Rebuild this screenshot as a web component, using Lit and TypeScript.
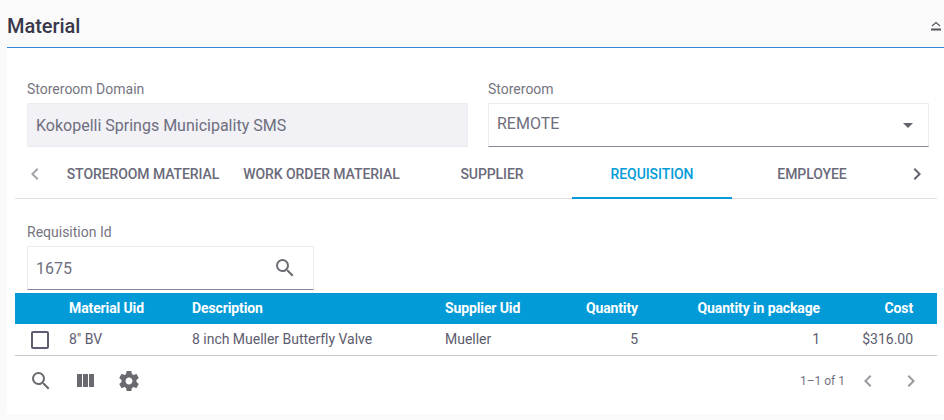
import { LitElement, html, css, svg } from "lit";
import { customElement } from "lit/decorators.js";

const P = {
  search: "M15.5 14h-.79l-.28-.27A6.471 6.471 0 0 0 16 9.5 6.5 6.5 0 1 0 9.5 16c1.61 0 3.09-.59 4.23-1.57l.27.28v.79l5 4.99L20.49 19l-4.99-5zm-6 0C7.01 14 5 11.99 5 9.5S7.01 5 9.5 5 14 7.01 14 9.5 11.99 14 9.5 14z",
  cols: "M10 18h5V5h-5v13zm-6 0h5V5H4v13zM16 5v13h5V5h-5z",
  gear: "M19.43 12.98c.04-.32.07-.64.07-.98s-.03-.66-.07-.98l2.11-1.65c.19-.15.24-.42.12-.64l-2-3.46c-.12-.22-.39-.3-.61-.22l-2.49 1c-.52-.4-1.08-.73-1.69-.98l-.38-2.65A.488.488 0 0 0 14 2h-4c-.25 0-.46.18-.49.42l-.38 2.65c-.61.25-1.17.59-1.69.98l-2.49-1c-.23-.09-.49 0-.61.22l-2 3.46c-.13.22-.07.49.12.64l2.11 1.65c-.04.32-.07.65-.07.98s.03.66.07.98l-2.11 1.65c-.19.15-.24.42-.12.64l2 3.46c.12.22.39.3.61.22l2.49-1c.52.4 1.08.73 1.69.98l.38 2.65c.03.24.24.42.49.42h4c.25 0 .46-.18.49-.42l.38-2.65c.61-.25 1.17-.59 1.69-.98l2.49 1c.23.09.49 0 .61-.22l2-3.46c.12-.22.07-.49-.12-.64l-2.11-1.65zM12 15.5c-1.93 0-3.5-1.57-3.5-3.5s1.57-3.5 3.5-3.5 3.5 1.57 3.5 3.5-1.57 3.5-3.5 3.5z",
  left: "M15.41 7.41L14 6l-6 6 6 6 1.41-1.41L10.83 12z",
  right: "M8.59 16.59L10 18l6-6-6-6-1.41 1.41L13.17 12z",
  drop: "M7 10l5 5 5-5z",
  box: "M19 5v14H5V5h14m0-2H5c-1.1 0-2 .9-2 2v14c0 1.1.9 2 2 2h14c1.1 0 2-.9 2-2V5c0-1.1-.9-2-2-2z",
};
const icon = (d: string, cls = "") =>
  html`<svg class="ic ${cls}" viewBox="0 0 24 24">${svg`<path d=${d}></path>`}</svg>`;

@customElement("app-root")
export class AppRoot extends LitElement {
  static styles = css`
    :host { display: block; width: 944px; height: 420px; background: #fafafa; overflow: hidden;
      font-family: Roboto, "Liberation Sans", sans-serif; color: #6e6e80; }
    * { box-sizing: border-box; }
    .ic { width: 24px; height: 24px; fill: currentColor; display: block; flex: none; }
    .head { height: 48px; margin-left: 7px; border-bottom: 1px solid #2f86d8; display: flex;
      align-items: center; justify-content: space-between; padding-top: 4px; }
    .title { font-size: 20px; font-weight: 500; color: #38384a; letter-spacing: -.05px; }
    .collapse { width: 10px; height: 10px; margin-right: 3px; display: block; fill: none; stroke: #55555f; }
    .card { margin-left: 7px; height: 366px; background: #fff; padding-top: 29px; }
    .fields { display: grid; grid-template-columns: 441px 441px; column-gap: 20px; padding-left: 20px; }
    .label { font-size: 14px; line-height: 16px; height: 18px; color: #75757f; padding-top: 4px; margin-bottom: 8px; }
    .input { height: 44px; font-size: 16px; display: flex; align-items: center; padding: 0 8px; color: #6e6e7e; }
    .disabled { background: #f1f1f6; border: 1px solid #ebebf0; border-radius: 1px; }
    .outlined { background: #fff; border: 1px solid #ebebf0; border-bottom: 1px solid #86869a; justify-content: space-between; }
    .outlined .ic { color: #63636b; }
    .remote { margin-top: -3px; }
    .tabs { margin: 3px 7px 0 8px; height: 49px; border-bottom: 1px solid #dfdfe3; display: flex; }
    .arrow { width: 40px; display: flex; align-items: center; justify-content: center; color: #a3a3ab; }
    .arrow.r { width: 45px; padding-left: 5px; color: #63636f; }
    .tab { height: 49px; font-size: 14px; font-weight: 500; color: #6a6a7a; display: flex; align-items: center;
      justify-content: center; white-space: nowrap; border-bottom: 2px solid transparent; letter-spacing: -.08px; padding-top: 1px; }
    .w176 { width: 176px; } .w181 { width: 181px; } .w160 { width: 160px; }
    .tab.active { color: #029bd8; border-bottom-color: #029bd8; }
    .req { padding: 21px 0 0 20px; }
    .searchbox { width: 287px; }
    .searchbox .ic { margin-right: 8px; color: #6b6b73; }
    .table { margin: 3px 7px 0 8px; }
    .row { display: grid; grid-template-columns: 54px 123px 253px 100px 93px 182px 93px 24px; align-items: center; }
    .row span { padding-bottom: 2px; }
    .hd { height: 31px; background: #029bd8; color: #fff; font-size: 14px; font-weight: 700; letter-spacing: -.12px; }
    .bd { height: 32px; border-bottom: 1px solid #c9c9cc; font-size: 14px; color: #5c5c6e; letter-spacing: -.02px; }
    .end { text-align: right; }
    .check { color: #5f5f73; margin-left: 13px; }
    .foot { display: flex; align-items: center; justify-content: space-between; height: 50px; padding: 0 14px 0 14px; color: #69696f; }
    .tools { display: flex; gap: 20px; }
    .pager { display: flex; align-items: center; font-size: 12px; color: #73737f; }
    .pager .ic { color: #9b9b9f; }
    .pager .p1 { margin-left: 11px; }
    .pager .p2 { margin-left: 19px; }
  `;

  render() {
    return html`
      <div class="head">
        <span class="title">Material</span>
        <svg class="collapse" viewBox="0 0 10 10">
          <path d="M1 5 L5 1.5 L9 5" stroke-width="1.2"></path>
          <path d="M0 8.5 H10" stroke-width="2"></path>
        </svg>
      </div>
      <div class="card">
        <div class="fields">
          <div>
            <div class="label">Storeroom Domain</div>
            <div class="input disabled">Kokopelli Springs Municipality SMS</div>
          </div>
          <div>
            <div class="label">Storeroom</div>
            <div class="input outlined"><span class="remote">REMOTE</span>${icon(P.drop)}</div>
          </div>
        </div>
        <div class="tabs">
          <div class="arrow">${icon(P.left)}</div>
          <div class="tab w176">STOREROOM MATERIAL</div>
          <div class="tab w181">WORK ORDER MATERIAL</div>
          <div class="tab w160">SUPPLIER</div>
          <div class="tab w160 active">REQUISITION</div>
          <div class="tab w160">EMPLOYEE</div>
          <div class="arrow r">${icon(P.right)}</div>
        </div>
        <div class="req">
          <div class="label">Requisition Id</div>
          <div class="input outlined searchbox"><span>1675</span>${icon(P.search)}</div>
        </div>
        <div class="table">
          <div class="row hd">
            <span></span><span>Material Uid</span><span>Description</span><span>Supplier Uid</span>
            <span class="end">Quantity</span><span class="end">Quantity in package</span><span class="end">Cost</span><span></span>
          </div>
          <div class="row bd">
            ${icon(P.box, "check")}<span>8" BV</span><span>8 inch Mueller Butterfly Valve</span><span>Mueller</span>
            <span class="end">5</span><span class="end">1</span><span class="end">$316.00</span><span></span>
          </div>
          <div class="foot">
            <div class="tools">${icon(P.search)}${icon(P.cols)}${icon(P.gear)}</div>
            <div class="pager"><span>1–1 of 1</span>${icon(P.left, "p1")}${icon(P.right, "p2")}</div>
          </div>
        </div>
      </div>
    `;
  }
}
